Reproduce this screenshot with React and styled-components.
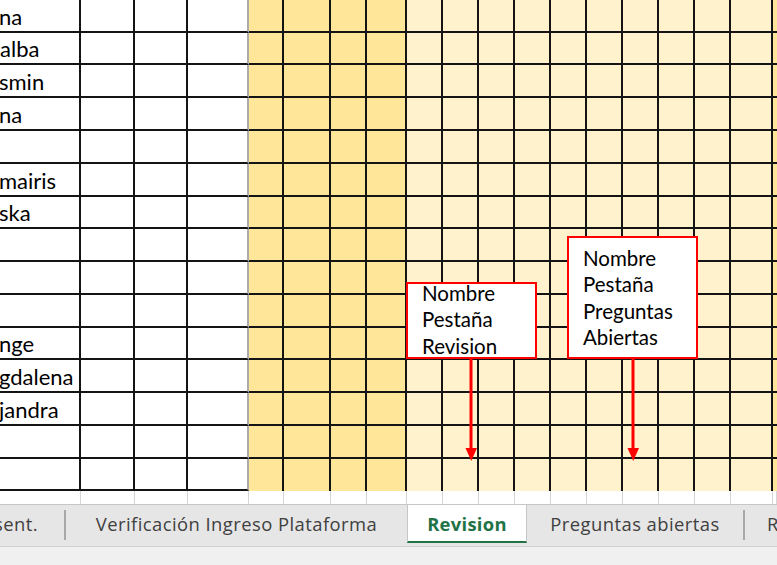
import React from "react";
import styled, { createGlobalStyle } from "styled-components";

const Global = createGlobalStyle`
  html, body { margin: 0; padding: 0; background: #ffffff; }
  #root { width: 777px; height: 565px; }
`;

const Page = styled.div`
  width: 777px;
  height: 565px;
  overflow: hidden;
  display: flex;
  flex-direction: column;
  background: #f0f0f0;
`;

const SheetArea = styled.div`
  position: relative;
  height: 504px;
  flex: none;
  overflow: hidden;
  background: #ffffff;
`;

const Grid = styled.div`
  display: grid;
  width: 777px;
  grid-template-columns: 81px 54px 53px 61px 35px 47px 36px 40px repeat(9, 36px) 42px 1fr;
  grid-template-rows: 33px 32px 33px 33px 33px 33px 32px 33px 33px 33px 32px 33px 33px 33px 32px 13px;
`;

const tones = {
  white: "#ffffff",
  dark: "#ffe699",
  light: "#fff2cc",
  blank: "#ffffff",
};

const Cell = styled.div`
  box-sizing: border-box;
  background: ${(p) => tones[p.$tone]};
  border-right: ${(p) =>
    p.$tone === "blank"
      ? "1px solid #d6d6d6"
      : p.$edge === "gray"
      ? "2px solid #ababab"
      : p.$edge === "none"
      ? "none"
      : "2px solid #141414"};
  border-bottom: ${(p) => (p.$bottom ? "2px solid #141414" : "none")};
  display: flex;
  align-items: flex-end;
  overflow: hidden;
  min-width: 0;
`;

const NameText = styled.span`
  font-family: Lato, "Liberation Sans", sans-serif;
  font-size: 22px;
  line-height: 1;
  color: #000000;
  white-space: nowrap;
  padding-bottom: 3px;
  margin-left: ${(p) => p.$shift || 0}px;
`;

const Callout = styled.div`
  position: absolute;
  box-sizing: border-box;
  left: ${(p) => p.$x}px;
  top: ${(p) => p.$y}px;
  width: ${(p) => p.$w}px;
  height: ${(p) => p.$h}px;
  background: #ffffff;
  border: 2px solid #ff0000;
  padding: ${(p) => p.$pt}px 0 0 14px;
`;

const CalloutText = styled.div`
  margin-top: ${(p) => p.$mt || 0}px;
`;

const CalloutLine = styled.div`
  font-family: Lato, "Liberation Sans", sans-serif;
  font-size: 20.5px;
  line-height: 26.3px;
  color: #000000;
  white-space: nowrap;
`;

const ArrowSvg = styled.svg`
  position: absolute;
  left: ${(p) => p.$x}px;
  top: 358px;
`;

const TabBar = styled.div`
  height: 43px;
  flex: none;
  box-sizing: border-box;
  background: #e6e6e6;
  border-top: 1px solid #c6c6c6;
  border-bottom: 1px solid #d0d0d0;
  display: flex;
  align-items: stretch;
  overflow: hidden;
`;

const Tab = styled.div`
  flex: none;
  box-sizing: border-box;
  width: ${(p) => (p.$w ? `${p.$w}px` : "auto")};
  display: flex;
  justify-content: ${(p) => p.$justify || "center"};
  padding: 7px ${(p) => p.$pr || 0}px 0 ${(p) => p.$pl || 0}px;
  font-family: "Open Sans", "Noto Sans", sans-serif;
  font-size: 18.4px;
  letter-spacing: 0.45px;
  line-height: 23px;
  color: #404040;
  white-space: nowrap;
`;

const ActiveTab = styled(Tab)`
  margin-top: -1px;
  height: 39px;
  padding-top: 8px;
  background: #ffffff;
  border-left: 1px solid #c6c6c6;
  border-right: 1px solid #c6c6c6;
  border-bottom: 2px solid #217346;
  color: #217346;
  font-weight: 700;
  letter-spacing: 0.3px;
`;

const Separator = styled.div`
  flex: none;
  width: 2px;
  margin: 5px 0 6px;
  background: #a8a8a8;
`;

const Footer = styled.div`
  flex: 1;
  background: #f0f0f0;
`;

const columns = [
  { tone: "white" },
  { tone: "white" },
  { tone: "white" },
  { tone: "white", edge: "gray" },
  { tone: "dark" },
  { tone: "dark" },
  { tone: "dark" },
  { tone: "dark" },
  ...Array.from({ length: 10 }, () => ({ tone: "light" })),
  { tone: "dark", edge: "none" },
];

const names = [
  { t: "na", s: -1 },
  { t: "alba", s: 0 },
  { t: "smin", s: -1 },
  { t: "na", s: -1 },
  null,
  { t: "mairis", s: -1 },
  { t: "ska", s: -1 },
  null,
  null,
  null,
  { t: "nge", s: -1 },
  { t: "gdalena", s: -1 },
  { t: "jandra", s: -1 },
  null,
  null,
];

function Arrow({ x }) {
  return (
    <ArrowSvg $x={x} width="13" height="104" viewBox="0 0 13 104">
      <rect x="4.5" y="0" width="3" height="92" fill="#ff0000" />
      <polygon points="0.5,90 12,90 6.25,103" fill="#ff0000" />
    </ArrowSvg>
  );
}

export default function App() {
  const rows = names.length;
  return (
    <>
      <Global />
      <Page>
        <SheetArea>
          <Grid>
            {names.map((n, r) =>
              columns.map((c, ci) => {
                const white = c.tone === "white";
                const lastRow = r === rows - 1;
                return (
                  <Cell
                    key={`${r}-${ci}`}
                    $tone={c.tone}
                    $edge={c.edge}
                    $bottom={white || !lastRow}
                  >
                    {ci === 0 && n ? <NameText $shift={n.s}>{n.t}</NameText> : null}
                  </Cell>
                );
              })
            )}
            {columns.map((c, ci) => (
              <Cell key={`strip-${ci}`} $tone="blank" $edge={c.edge} />
            ))}
          </Grid>

          <Callout $x={406} $y={282} $w={131} $h={77} $pt={0}>
            <CalloutText $mt={-4}>
              <CalloutLine>Nombre</CalloutLine>
              <CalloutLine>Pestaña</CalloutLine>
              <CalloutLine>Revision</CalloutLine>
            </CalloutText>
          </Callout>
          <Callout $x={567} $y={236} $w={131} $h={123} $pt={7}>
            <CalloutText>
              <CalloutLine>Nombre</CalloutLine>
              <CalloutLine>Pestaña</CalloutLine>
              <CalloutLine>Preguntas</CalloutLine>
              <CalloutLine>Abiertas</CalloutLine>
            </CalloutText>
          </Callout>
          <Arrow x={465} />
          <Arrow x={627} />
        </SheetArea>

        <TabBar>
          <Tab $w={64} $justify="flex-end" $pr={26}>
            sent.
          </Tab>
          <Separator />
          <Tab $w={341}>Verificación Ingreso Plataforma</Tab>
          <ActiveTab $w={120}>Revision</ActiveTab>
          <Tab $w={216}>Preguntas abiertas</Tab>
          <Separator />
          <Tab $pl={22}>Resultados</Tab>
        </TabBar>
        <Footer />
      </Page>
    </>
  );
}
